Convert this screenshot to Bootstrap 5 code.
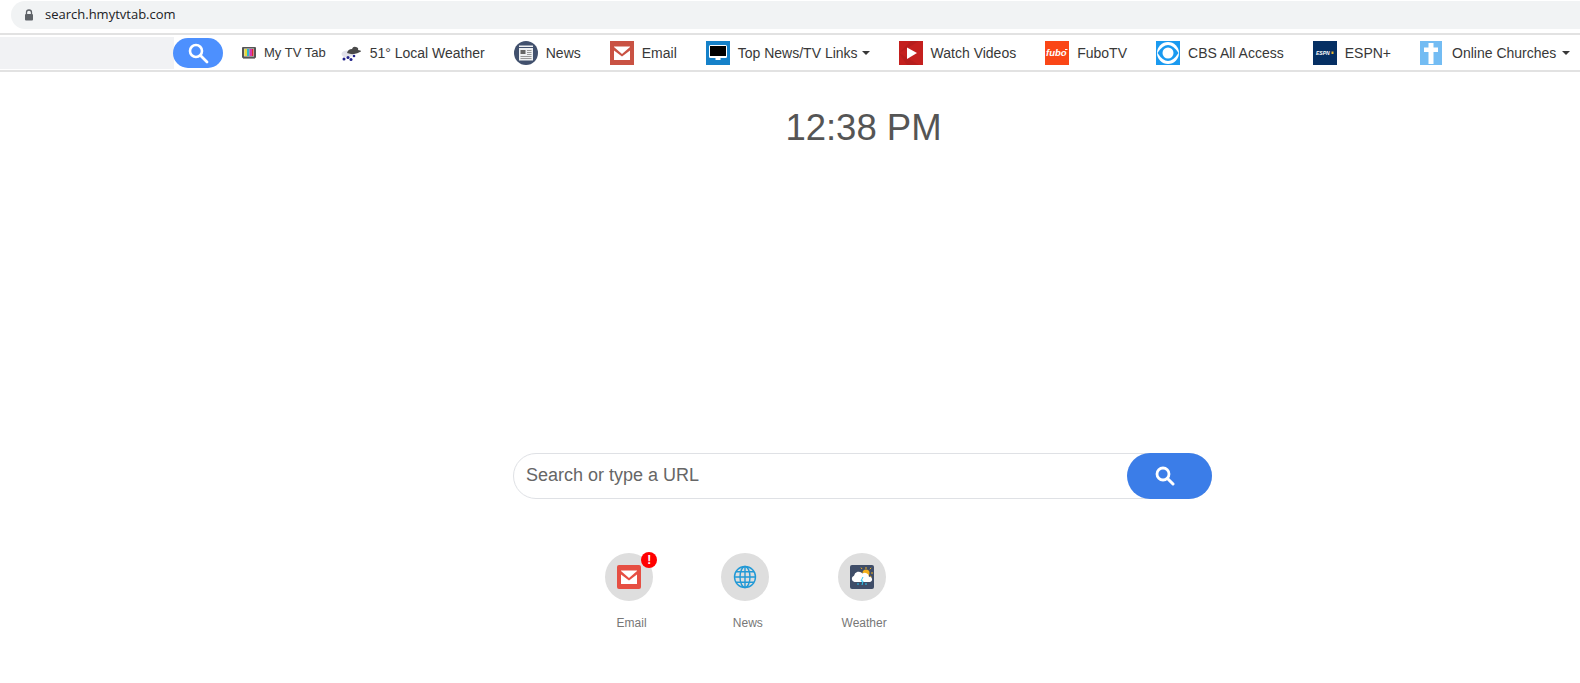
<!DOCTYPE html>
<html lang="en">
<head>
  <meta charset="UTF-8" />
  <meta name="viewport" content="width=device-width, initial-scale=1.0"/>
  <title>search.hmytvtab.com</title>

  <!-- Bootstrap CSS -->
  <link href="https://cdn.jsdelivr.net/npm/bootstrap@5.3.0/dist/css/bootstrap.min.css" rel="stylesheet">
  <style>
    body {
      background-color: #fff;
      font-family: "Liberation Sans", Arial, sans-serif;
      overflow: hidden;
    }
    .addr-strip {
      height: 33px;
      padding: 1px 0 0 11px;
    }
    .addr-pill {
      height: 28px;
      background-color: #f1f3f4;
      border-radius: 14px 0 0 14px;
      padding-left: 13px;
      gap: 11px;
      font-family: "Open Sans", sans-serif;
      font-size: 13px;
      color: #202124;
    }
    .top-menu {
      --bs-navbar-nav-link-padding-x: 0;
      height: 39px;
      border-top: 2px solid #e2e2e2;
      border-bottom: 2px solid #e2e2e2;
      padding: 0;
      flex-wrap: nowrap;
      justify-content: flex-start;
    }
    .search-slot {
      width: 174px;
      height: 32px;
      background-color: #f1f2f4;
      flex: none;
    }
    .search-pill {
      width: 50px;
      height: 30px;
      margin-left: -1px;
      background-color: #4d90fe;
      border-radius: 15px;
      flex: none;
      border: 0;
      padding: 0;
    }
    .menu-list {
      margin-left: 19px;
      gap: 29px;
    }
    .menu-list .nav-link {
      gap: 8px;
      color: #383838;
      font-size: 14px;
      line-height: 24px;
      padding-top: 1px;
      padding-bottom: 0;
      white-space: nowrap;
    }
    .menu-list svg { flex: none; }
    .menu-list .dropdown-toggle::after {
      margin-left: -4px;
      margin-right: 0;
      vertical-align: 2px;
      border-top-width: 4px;
      border-left-width: 4px;
      border-right-width: 4px;
    }
    .menu-list .tight-text { font-size: 13px; }
    .menu-list .tight-item { margin-right: -14px; }
    .menu-list .weather-link { gap: 9px; }
    .menu-list .church-link { gap: 10px; }
    .main-col {
      width: 699px;
      margin-left: 513px;
    }
    .clock-text {
      margin-top: 34px;
      font-size: 36.5px;
      line-height: 44px;
      color: #555;
      text-align: center;
      padding-left: 2px;
    }
    .search-row {
      margin-top: 303px;
      height: 46px;
      border: 1px solid #dfe1e5;
      border-radius: 23px;
      background-color: #fff;
    }
    .search-input {
      border: 0;
      background: transparent;
      font-size: 18px;
      color: #555;
      padding: 0 0 2px 12px;
      box-shadow: none !important;
    }
    .search-input::placeholder { color: #666; opacity: 1; }
    .search-go {
      width: 85px;
      height: 46px;
      margin: -1px -1px -1px 0;
      background-color: #3b7de8;
      border: 0;
      border-radius: 23px;
      flex: none;
      padding: 0 10px 0 0;
    }
    .shortcut-row {
      margin-top: 54px;
      margin-left: 58px;
    }
    .shortcut-item {
      width: 116.25px;
      text-decoration: none;
    }
    .shortcut-ring {
      width: 48px;
      height: 48px;
      background-color: #dedede;
      border-radius: 50%;
    }
    .shortcut-label {
      margin-top: 14px;
      padding-left: 5px;
      font-size: 12px;
      line-height: 16px;
      color: #777;
    }
    .alert-dot {
      position: absolute;
      top: -1px;
      right: 30px;
      width: 16px;
      height: 16px;
      border-radius: 50%;
      background-color: #f00;
      color: #fff;
      font-size: 12px;
      font-weight: 700;
      line-height: 16px;
      text-align: center;
    }
  </style>
</head>
<body>
  <!-- Browser address bar -->
  <div class="addr-strip">
    <div class="addr-pill d-flex align-items-center">
      <svg width="10" height="12" viewBox="0 0 10 12"><path d="M2.5 5V3.5a2.5 2.5 0 0 1 5 0V5" fill="none" stroke="#5f6368" stroke-width="1.3"/><rect x="1" y="5" width="8" height="6.5" rx="1" fill="#5f6368"/></svg>
      <span>search.hmytvtab.com</span>
    </div>
  </div>

  <!-- Navbar -->
  <nav class="navbar navbar-expand top-menu">
    <div class="search-slot"></div>
    <button class="search-pill d-flex align-items-center justify-content-center" type="button" aria-label="Search">
      <svg width="22" height="22" viewBox="0 0 22 22"><circle cx="9" cy="9" r="6" fill="none" stroke="#fff" stroke-width="2.6"/><path d="M13.5 13.5L20 20" stroke="#fff" stroke-width="2.8" stroke-linecap="round"/></svg>
    </button>
    <ul class="navbar-nav menu-list align-items-center">
      <li class="nav-item tight-item"><a class="nav-link d-flex align-items-center" href="#">
        <svg width="14" height="12" viewBox="0 0 14 12"><rect width="14" height="11" rx="1" fill="#555"/><rect x="2" y="1.500" width="10" height="8" fill="#ddd"/><rect x="2.500" y="2" width="2.500" height="7" fill="#e8d838"/><rect x="5" y="2" width="2.500" height="7" fill="#30b8c8"/><rect x="7.500" y="2" width="2.500" height="7" fill="#d838b0"/><rect x="10" y="2" width="1.500" height="7" fill="#d83030"/><rect x="1" y="11" width="12" height="1" fill="#999"/></svg>
        <span class="tight-text">My TV Tab</span></a></li>
      <li class="nav-item"><a class="nav-link weather-link d-flex align-items-center" href="#">
        <svg width="20" height="16" viewBox="0 0 20 16"><ellipse cx="6" cy="9" rx="5.500" ry="3.500" fill="#e2e2ea"/><path d="M6 8q1-4 5-4 1-3 4-2t2 3q3 0 3 1.500-4 2-7 2.500T6 8z" fill="#4a4a4a"/><circle cx="3" cy="14" r="1.500" fill="#22228a"/><circle cx="7" cy="12.500" r="1.500" fill="#22228a"/><circle cx="10" cy="14.500" r="1.500" fill="#22228a"/><circle cx="13" cy="11" r="1.300" fill="#22228a"/></svg>
        <span>51° Local Weather</span></a></li>
      <li class="nav-item"><a class="nav-link d-flex align-items-center" href="#">
        <svg width="24" height="24" viewBox="0 0 24 24"><circle cx="12" cy="12" r="12" fill="#41506d"/><rect x="5" y="4.500" width="14" height="15" fill="#eef0f2"/><rect x="5" y="6" width="14" height="1" fill="#41506d"/><rect x="6.500" y="9" width="5" height="4" fill="#666"/><path d="M13 9.500h4.500M13 11.500h4.500M13 13.500h4.500M6.500 15.500h11M6.500 17.500h11" stroke="#999" stroke-width="1"/></svg>
        <span>News</span></a></li>
      <li class="nav-item"><a class="nav-link d-flex align-items-center" href="#">
        <svg width="24" height="24" viewBox="0 0 24 24"><rect width="24" height="24" fill="#c95243"/><path d="M4 5.500h16V19H4z" fill="#fff"/><path d="M4 6l8 7 8-7v3.500l-8 6-8-6z" fill="#c95243"/></svg>
        <span>Email</span></a></li>
      <li class="nav-item"><a class="nav-link dropdown-toggle d-flex align-items-center" href="#">
        <svg width="24" height="24" viewBox="0 0 24 24"><rect width="24" height="24" fill="#1581c9"/><rect x="3" y="4" width="18" height="13" rx="1.500" fill="#fff"/><rect x="4" y="5" width="16" height="10" fill="#000"/><rect x="9.500" y="17" width="5" height="2" fill="#fff"/></svg>
        <span>Top News/TV Links</span></a></li>
      <li class="nav-item"><a class="nav-link d-flex align-items-center" href="#">
        <svg width="24" height="24" viewBox="0 0 24 24"><rect width="24" height="24" fill="#c4201e"/><path d="M0 12L20 0H12zM0 12L20 24H8z" fill="#a81a1a" opacity=".5"/><path d="M8 6.500l10 5.500-10 6z" fill="#fff"/></svg>
        <span>Watch Videos</span></a></li>
      <li class="nav-item"><a class="nav-link d-flex align-items-center" href="#">
        <svg width="24" height="24" viewBox="0 0 24 24"><rect width="24" height="24" fill="#fa4616"/><text x="1" y="15" font-family="Liberation Sans" font-size="9.500" font-style="italic" font-weight="700" fill="#fff">fubo</text><rect x="20" y="8" width="2.500" height="1" fill="#fff"/></svg>
        <span>FuboTV</span></a></li>
      <li class="nav-item"><a class="nav-link d-flex align-items-center" href="#">
        <svg width="24" height="24" viewBox="0 0 24 24"><rect width="24" height="24" fill="#1a9af0"/><circle cx="12" cy="12" r="11" fill="#fff"/><path d="M1.500 12Q12 -4 22.500 12 12 28 1.500 12z" fill="#1a9af0"/><circle cx="12" cy="12" r="5.500" fill="#fff"/></svg>
        <span>CBS All Access</span></a></li>
      <li class="nav-item"><a class="nav-link d-flex align-items-center" href="#">
        <svg width="24" height="24" viewBox="0 0 24 24"><rect width="24" height="24" fill="#052f63"/><text x="3" y="14" font-family="Liberation Sans" font-size="5" font-weight="700" font-style="italic" fill="#fff">ESPN</text><rect x="18.500" y="10.500" width="2" height="2.500" fill="#e8b830"/></svg>
        <span>ESPN+</span></a></li>
      <li class="nav-item"><a class="nav-link church-link dropdown-toggle d-flex align-items-center" href="#">
        <svg width="22" height="24" viewBox="0 0 22 24"><rect width="22" height="24" fill="#73bcf3"/><path d="M8.500 2h5v4.500H18V11h-4.500v12h-5V11H4V6.500h4.500z" fill="#fff"/></svg>
        <span>Online Churches</span></a></li>
    </ul>
  </nav>

  <div class="main-col">
    <div class="clock-text">12:38 PM</div>

    <form class="search-row d-flex align-items-center">
      <input class="form-control search-input" type="text" placeholder="Search or type a URL">
      <button class="search-go d-flex align-items-center justify-content-center" type="button" aria-label="Search">
        <svg width="20" height="20" viewBox="0 0 20 20"><circle cx="8" cy="8" r="6" fill="none" stroke="#fff" stroke-width="2.800"/><path d="M12.500 12.500l5.500 5.500" stroke="#fff" stroke-width="3" stroke-linecap="round"/></svg>
      </button>
    </form>

    <!-- Shortcuts -->
    <div class="shortcut-row d-flex">
      <a class="shortcut-item d-flex flex-column align-items-center position-relative" href="#">
        <div class="shortcut-ring d-flex align-items-center justify-content-center">
          <svg width="24" height="24" viewBox="0 0 24 24"><rect width="24" height="24" rx="2" fill="#e64f43"/><path d="M4 5.500h16V19H4z" fill="#fff"/><path d="M4 6l8 7 8-7v3.500l-8 6-8-6z" fill="#e64f43"/></svg>
        </div>
        <span class="alert-dot">!</span>
        <span class="shortcut-label">Email</span>
      </a>
      <a class="shortcut-item d-flex flex-column align-items-center" href="#">
        <div class="shortcut-ring d-flex align-items-center justify-content-center">
          <svg width="24" height="24" viewBox="0 0 24 24" fill="none" stroke="#2199d6" stroke-width="1.400"><circle cx="12" cy="12" r="10.500"/><ellipse cx="12" cy="12" rx="5" ry="10.500"/><path d="M12 1.500v21M1.500 12h21M3 6.800h18M3 17.200h18"/></svg>
        </div>
        <span class="shortcut-label">News</span>
      </a>
      <a class="shortcut-item d-flex flex-column align-items-center" href="#">
        <div class="shortcut-ring d-flex align-items-center justify-content-center">
          <svg width="24" height="24" viewBox="0 0 24 24"><rect width="24" height="24" rx="2" fill="#3f4d68"/><circle cx="16" cy="8" r="3.500" fill="#f2b01e"/><path d="M16 2v2M21 8h2M19.800 4.200l1.400-1.400M12 4l-1-1.400M20 11l1.500 1" stroke="#f2b01e" stroke-width="1"/><path d="M4.500 17a3.200 3.200 0 0 1 -.500-6.200 4.800 4.800 0 0 1 8.500-2.300 4.300 4.300 0 0 1 6.500 3.200 2.700 2.700 0 0 1 1 5.300z" fill="#fff"/><path d="M13 12l-2 4h2l-1 4M8 18v2M16 18v2" stroke="#2bc5ef" stroke-width="1" fill="none"/></svg>
        </div>
        <span class="shortcut-label">Weather</span>
      </a>
    </div>
  </div>

  <!-- Scripts -->
  <script src="https://cdn.jsdelivr.net/npm/bootstrap@5.3.0/dist/js/bootstrap.bundle.min.js"></script>
</body>
</html>
